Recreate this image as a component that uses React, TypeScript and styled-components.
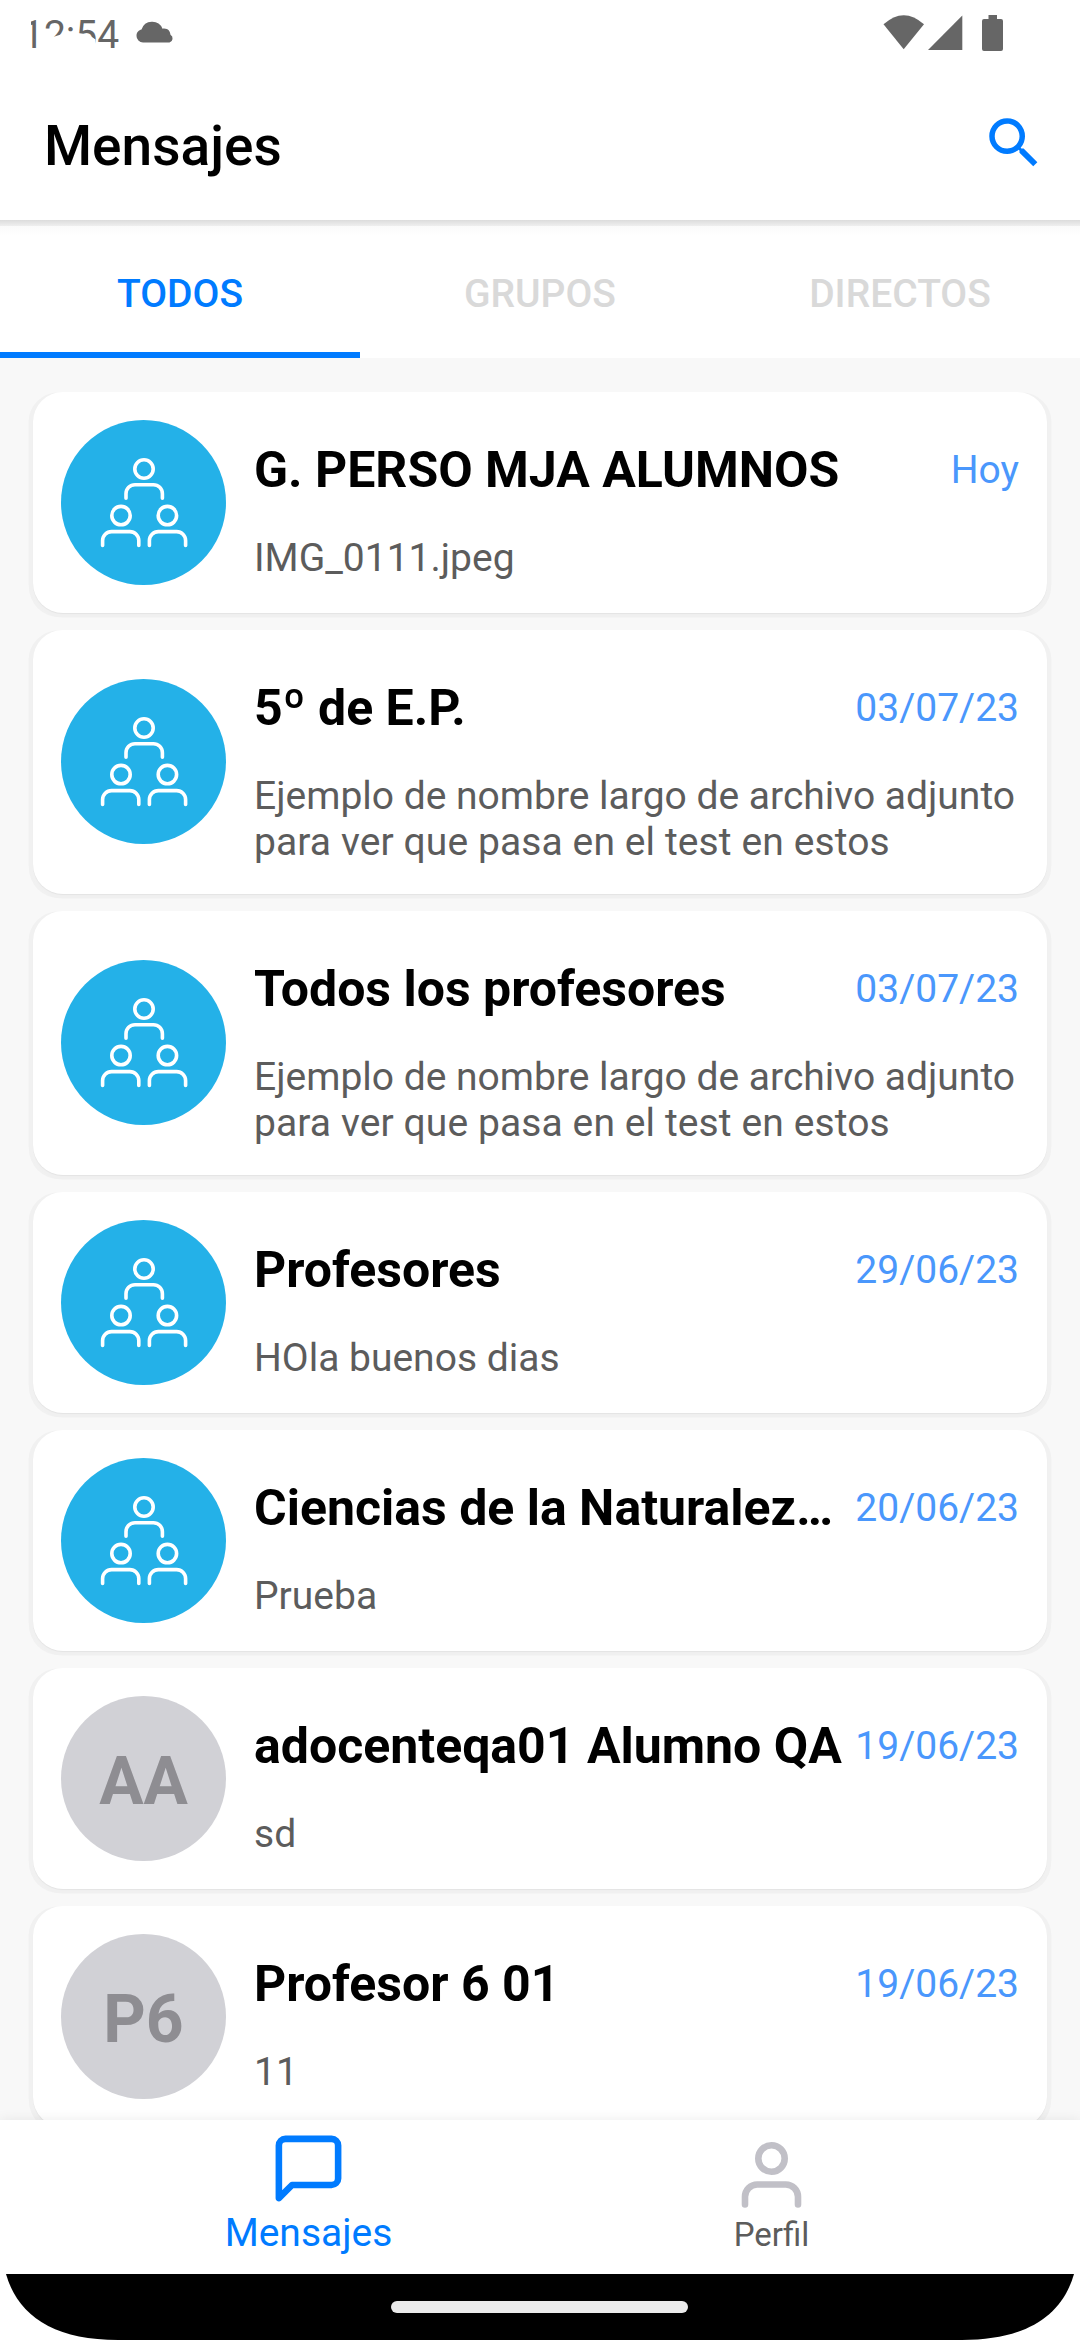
import React from 'react';
import styled, { createGlobalStyle } from 'styled-components';

const GlobalStyle = createGlobalStyle`
  * { box-sizing: border-box; }
  body { margin: 0; background: #fff; font-family: Roboto, "Noto Sans", sans-serif; }
`;

const Screen = styled.div`
  width: 1080px;
  height: 2340px;
  display: flex;
  flex-direction: column;
  overflow: hidden;
  background: #fff;
`;

const StatusBar = styled.div`
  height: 66px;
  flex: none;
  display: flex;
  align-items: flex-start;
  justify-content: space-between;
  padding: 0 76px 0 22px;
  color: #666;
`;

const StatusGroup = styled.div`
  display: flex;
  align-items: flex-start;
`;

const Clock = styled.div`
  position: relative;
  width: 97px;
  margin-top: 12px;
  font-size: 39px;
  line-height: 46px;
`;

const ClockCutout = styled.svg`
  position: absolute;
  left: 0;
  top: 0;
  display: block;
`;

const StatusIcon = styled.svg<{ $left?: number }>`
  display: block;
  margin-left: ${(p) => p.$left ?? 0}px;
`;

const Header = styled.header`
  height: 154px;
  flex: none;
  display: flex;
  align-items: center;
  justify-content: space-between;
  padding: 7px 33px 0 44px;
`;

const Heading = styled.h1`
  margin: 0 0 1px;
  font-size: 55px;
  line-height: 64px;
  font-weight: 500;
  color: #000;
`;

const SearchIcon = styled.svg`
  display: block;
  margin: 0 0 7px;
`;

const Tabs = styled.nav`
  height: 138px;
  flex: none;
  display: grid;
  grid-template-columns: repeat(3, 1fr);
  background: linear-gradient(#dcdcdc 0, #efefef 6px, #fafafa 6px, #fff 16px);
`;

const Tab = styled.div<{ $active?: boolean }>`
  display: flex;
  align-items: center;
  justify-content: center;
  padding-top: 15px;
  font-size: 39px;
  font-weight: 500;
  color: ${(p) => (p.$active ? '#007bff' : '#d9d9d9')};
  border-bottom: 6px solid ${(p) => (p.$active ? '#007bff' : 'transparent')};
`;

const List = styled.main`
  flex: 1;
  min-height: 0;
  overflow: hidden;
  display: flex;
  flex-direction: column;
  gap: 17px;
  padding: 34px 33px 0;
  background: #f8f8f8;
`;

const Card = styled.article<{ $tall?: boolean }>`
  height: ${(p) => (p.$tall ? 264 : 221)}px;
  flex: none;
  display: flex;
  align-items: center;
  gap: 28px;
  padding: 0 28px ${(p) => (p.$tall ? 1 : 0)}px;
  border-radius: 30px;
  background: #fff;
  box-shadow: 0 1px 1px rgba(0, 0, 0, 0.05), 0 5px 0 -0.5px #f0f0f0, 5px 0 0 -0.5px #f1f1f1, -5px 0 0 -0.5px #f1f1f1,
    4px 4px 0 0 #f1f1f1, -4px 4px 0 0 #f1f1f1;
`;

const Avatar = styled.div<{ $group?: boolean }>`
  width: 165px;
  height: 165px;
  flex: none;
  border-radius: 50%;
  display: flex;
  align-items: center;
  justify-content: center;
  background: ${(p) => (p.$group ? '#24b1e8' : '#d1d1d6')};
  color: #8e8d92;
  font-size: 66px;
  font-weight: 700;
  padding-top: ${(p) => (p.$group ? 0 : 6)}px;
`;

const Body = styled.div`
  flex: 1;
  min-width: 0;
  align-self: stretch;
  display: flex;
  flex-direction: column;
  padding-top: 46px;
`;

const TitleRow = styled.div`
  display: flex;
  align-items: center;
  justify-content: space-between;
  height: 64px;
`;

const Title = styled.h2`
  margin: 0;
  white-space: nowrap;
  font-size: 50px;
  line-height: 64px;
  font-weight: 700;
  color: #000;
`;

const DateLabel = styled.span`
  font-size: 39px;
  line-height: 46px;
  white-space: nowrap;
  color: #4a97fc;
`;

const Preview = styled.p`
  margin: 33px 0 0;
  font-size: 39px;
  line-height: 46px;
  letter-spacing: 0.1px;
  color: #5c5c5c;
  white-space: pre-line;

  &::first-line {
    letter-spacing: 0;
  }
`;

const BottomNav = styled.footer`
  height: 154px;
  flex: none;
  display: flex;
  justify-content: center;
  background: #fff;
  box-shadow: 0 0 12px rgba(0, 0, 0, 0.08);
  position: relative;
`;

const NavItem = styled.div<{ $active?: boolean }>`
  width: 463px;
  display: flex;
  flex-direction: column;
  align-items: center;
  gap: ${(p) => (p.$active ? 2 : 4)}px;
  padding-top: 9px;
  font-size: ${(p) => (p.$active ? 39 : 33)}px;
  line-height: 46px;
  color: ${(p) => (p.$active ? '#007bff' : '#5c5c5c')};
`;

const NavIcon = styled.svg`
  display: block;
  flex: none;
`;

const SystemBar = styled.div`
  height: 66px;
  flex: none;
  background: #fff;
  display: flex;
  position: relative;
`;

const SystemShape = styled.svg`
  display: block;
`;

const GroupIcon = () => (
  <svg width="100" height="100" viewBox="0 0 100 100" fill="none" stroke="#fff" strokeWidth="3.6" strokeLinecap="round">
    <circle cx="50" cy="16" r="9.2" />
    <path d="M32 45.2v-4.5a9 9 0 0 1 9-9h18.400a9 9 0 0 1 9 9v4.500" />
    <circle cx="27" cy="62.6" r="9.2" />
    <path d="M8.600 92.400v-4.800a9 9 0 0 1 9-9h18.200a9 9 0 0 1 9 9v4.800" />
    <circle cx="73.4" cy="62.6" r="9.2" />
    <path d="M55.400 92.400v-4.800a9 9 0 0 1 9-9h18.200a9 9 0 0 1 9 9v4.800" />
  </svg>
);

type Chat = { title: string; date: string; preview: string; initials?: string; tall?: boolean };

const longName = 'Ejemplo de nombre largo de archivo adjunto\npara ver que pasa en el test en estos';

const chats: Chat[] = [
  { title: 'G. PERSO MJA ALUMNOS', date: 'Hoy', preview: 'IMG_0111.jpeg' },
  { title: '5º de E.P.', date: '03/07/23', preview: longName, tall: true },
  { title: 'Todos los profesores', date: '03/07/23', preview: longName, tall: true },
  { title: 'Profesores', date: '29/06/23', preview: 'HOla buenos dias' },
  { title: 'Ciencias de la Naturalez…', date: '20/06/23', preview: 'Prueba' },
  { title: 'adocenteqa01 Alumno QA', date: '19/06/23', preview: 'sd', initials: 'AA' },
  { title: 'Profesor 6 01', date: '19/06/23', preview: '11', initials: 'P6' },
];

export default function App() {
  return (
    <>
      <GlobalStyle />
      <Screen>
        <StatusBar>
          <StatusGroup>
            <Clock>
              12:54
              <ClockCutout width="97" height="46" viewBox="0 0 97 46" fill="#fff">
                <path d="M0 0H9V40H0zM20 25L31 25L42 21.500L56 21Q67 22 73.500 27.500V40H20z" />
              </ClockCutout>
            </Clock>
            <StatusIcon $left={17} width="40" height="44" viewBox="0 0 40 44" fill="#666">
              <path d="M7 42.500a6.500 6.500 0 0 1-6.500-6.500c0-4 2.500-6 5-6.500A11.200 11.200 0 0 1 26.500 28.700C32 28 34 31 34.500 34.700A4.300 4.300 0 0 1 33.500 42.500z" />
            </StatusIcon>
          </StatusGroup>
          <StatusGroup>
            <StatusIcon width="42" height="52" viewBox="0 0 42 52" fill="#666">
              <path d="M0.500 24.300Q20.700 6 41 24.300L20.700 49.300z" />
            </StatusIcon>
            <StatusIcon $left={3} width="35" height="52" viewBox="0 0 35 52" fill="#666">
              <path d="M34.300 15.500V50H0z" />
            </StatusIcon>
            <StatusIcon $left={19} width="22" height="52" viewBox="0 0 22 52" fill="#666">
              <path d="M6.500 15H15v4h4a2 2 0 0 1 2 2v28a2 2 0 0 1-2 2H2a2 2 0 0 1-2-2V21a2 2 0 0 1 2-2h4.500z" />
            </StatusIcon>
          </StatusGroup>
        </StatusBar>

        <Header>
          <Heading>Mensajes</Heading>
          <SearchIcon width="66" height="66" viewBox="0 0 24 24" fill="#007bff">
            <path d="M15.500 14h-.79l-.28-.27A6.471 6.471 0 0 0 16 9.500 6.500 6.500 0 1 0 9.500 16c1.610 0 3.090-.59 4.230-1.570l.27.28v.79l5 4.990L20.490 19l-4.990-5zm-6 0C7.010 14 5 11.990 5 9.500S7.010 5 9.500 5 14 7.010 14 9.500 11.990 14 9.500 14z" />
          </SearchIcon>
        </Header>

        <Tabs>
          <Tab $active>TODOS</Tab>
          <Tab>GRUPOS</Tab>
          <Tab>DIRECTOS</Tab>
        </Tabs>

        <List>
          {chats.map((c) => (
            <Card key={c.title} $tall={c.tall}>
              <Avatar $group={!c.initials}>{c.initials ?? <GroupIcon />}</Avatar>
              <Body>
                <TitleRow>
                  <Title>{c.title}</Title>
                  <DateLabel>{c.date}</DateLabel>
                </TitleRow>
                <Preview>{c.preview}</Preview>
              </Body>
            </Card>
          ))}
        </List>

        <BottomNav>
          <NavItem $active>
            <NavIcon width="79" height="79" viewBox="0 0 24 24" fill="none" stroke="#007bff" strokeWidth="2" strokeLinecap="round" strokeLinejoin="round">
              <path d="M21 15a2 2 0 0 1-2 2H7l-4 4V5a2 2 0 0 1 2-2h14a2 2 0 0 1 2 2z" />
            </NavIcon>
            Mensajes
          </NavItem>
          <NavItem>
            <NavIcon width="79" height="79" viewBox="0 0 79 79" fill="none" stroke="#c1c0c7" strokeWidth="6.6" strokeLinecap="round">
              <circle cx="39.5" cy="29.5" r="13.2" />
              <path d="M13 75.500v-7.800A12.200 12.200 0 0 1 25.200 55.500h28.600A12.200 12.200 0 0 1 66 67.700v7.800" />
            </NavIcon>
            Perfil
          </NavItem>
        </BottomNav>

        <SystemBar>
          <SystemShape width="1080" height="66" viewBox="0 0 1080 66">
            <path d="M6 0H1074C1062 42 1026 66 962 66H118C54 66 18 42 6 0z" fill="#000" />
            <rect x="391" y="27" width="297" height="12" rx="6" fill="#ebebeb" />
          </SystemShape>
        </SystemBar>
      </Screen>
    </>
  );
}
